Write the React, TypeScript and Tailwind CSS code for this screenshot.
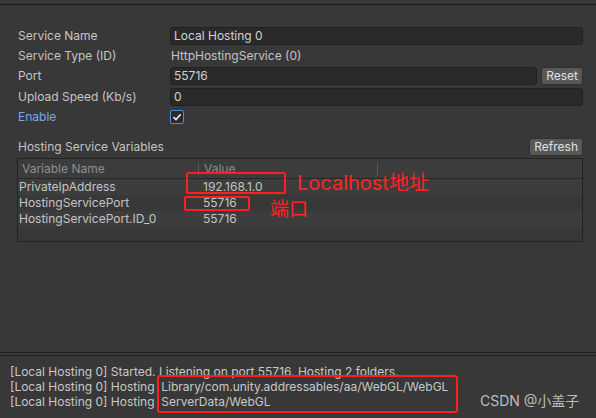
import React from 'react';

const font = { fontFamily: 'Inter, "Noto Sans CJK SC", sans-serif' };

type Row = { name: string; value: string };

const vars: Row[] = [
  { name: 'PrivateIpAddress', value: '192.168.1.0' },
  { name: 'HostingServicePort', value: '55716' },
  { name: 'HostingServicePort.ID_0', value: '55716' },
];

function Field({ value }: { value: string }) {
  return (
    <div className="flex-1 h-[18px] flex items-center px-[3px] rounded-[3px] bg-[#2a2a2a] border border-[#212121] text-[#d2d2d2]">
      {value}
    </div>
  );
}

function Btn({ label }: { label: string }) {
  return (
    <div className="h-[18px] px-[4px] flex items-center rounded-[3px] bg-[#585858] border border-[#303030] text-[#e0e0e0]">
      {label}
    </div>
  );
}

export default function App() {
  return (
    <div style={font} className="relative w-[596px] h-[418px] overflow-hidden bg-[#383838] text-[12px] text-[#c4c4c4] flex flex-col">
      <div className="h-[4px]" />
      <div className="h-px bg-[#1c1c1c]" />

      {/* inspector fields */}
      <div className="pl-[18px] pr-[13px] pt-[21px] flex flex-col">
        <div className="h-[20px] flex items-center">
          <div className="w-[152px]">Service Name</div>
          <Field value="Local Hosting 0" />
        </div>
        <div className="h-[20px] flex items-center">
          <div className="w-[152px]">Service Type (ID)</div>
          <div className="pl-[1px]">HttpHostingService (0)</div>
        </div>
        <div className="h-[20px] flex items-center gap-[4px]">
          <div className="w-[148px]">Port</div>
          <Field value="55716" />
          <Btn label="Reset" />
        </div>
        <div className="h-[21px] flex items-center">
          <div className="w-[152px]">Upload Speed (Kb/s)</div>
          <Field value="0" />
        </div>
        <div className="h-[20px] flex items-center">
          <div className="w-[152px] text-[#7aa8ea]">Enable</div>
          <div className="w-[14px] h-[14px] rounded-[2px] border border-[#4a8edc] bg-[#2a2a2a] flex items-center justify-center">
            <svg width="10" height="10" viewBox="0 0 10 10">
              <path d="M1.5 5.2 L4 7.6 L8.6 2.4" stroke="#e8e8e8" strokeWidth="1.6" fill="none" />
            </svg>
          </div>
        </div>

        <div className="mt-[10px] h-[20px] flex items-center justify-between">
          <div>Hosting Service Variables</div>
          <Btn label="Refresh" />
        </div>

        {/* variables table */}
        <div className="-ml-px mt-px border border-[#232323] bg-[#383838] flex flex-col">
          <div className="h-[20px] flex items-center bg-[#3c3c3c] border-b border-[#262626] text-[#8e8e8e]">
            <div className="w-[180px] pl-[4px]">Variable Name</div>
            <div className="w-px h-[12px] bg-[#5a5a5a]" />
            <div className="w-[178px] pl-[5px]">Value</div>
            <div className="w-px h-[12px] bg-[#5a5a5a]" />
          </div>
          {vars.map((v, i) => (
            <div key={v.name} className={`h-[16px] flex items-center ${i % 2 === 0 ? 'bg-[#3d3d3d]' : 'bg-[#383838]'}`}>
              <div className="w-[185px] pl-[1px]">{v.name}</div>
              <div>{v.value}</div>
            </div>
          ))}
          <div className="h-[14px] bg-[#383838]" />
        </div>
      </div>

      <div className="flex-1" />

      {/* console */}
      <div className="h-px bg-[#1f1f1f]" />
      <div className="h-[2px]" />
      <div className="h-px bg-[#1f1f1f]" />
      <div className="pl-[10px] pt-[8px] pb-[9px] flex flex-col text-[#c8c8c8]">
        <div className="h-[15px] flex items-center">[Local Hosting 0] Started. Listening on port 55716. Hosting 2 folders.</div>
        <div className="h-[15px] flex items-center">[Local Hosting 0] Hosting&nbsp;&nbsp;Library/com.unity.addressables/aa/WebGL/WebGL</div>
        <div className="h-[15px] flex items-center">[Local Hosting 0] Hosting&nbsp;&nbsp;ServerData/WebGL</div>
      </div>

      {/* annotations */}
      <div className="absolute left-[186px] top-[172px] w-[100px] h-[22px] border-2 border-[#ff1f1f] rounded-[2px]" />
      <div className="absolute left-[184px] top-[196px] w-[66px] h-[15px] border-2 border-[#ff1f1f] rounded-[2px]" />
      <div className="absolute left-[297px] top-[171px] text-[20px] leading-[24px] text-[#ff2424]">Localhost地址</div>
      <div className="absolute left-[270px] top-[198px] text-[19px] leading-[24px] text-[#ff2424]">端口</div>
      <div className="absolute left-[157px] top-[375px] w-[301px] h-[38px] border-2 border-[#ff1f1f] rounded-[3px]" />
      <div className="absolute left-[480px] top-[392px] text-[14px] leading-[18px] text-[#bdbdbd]">CSDN @小盖子</div>
    </div>
  );
}
